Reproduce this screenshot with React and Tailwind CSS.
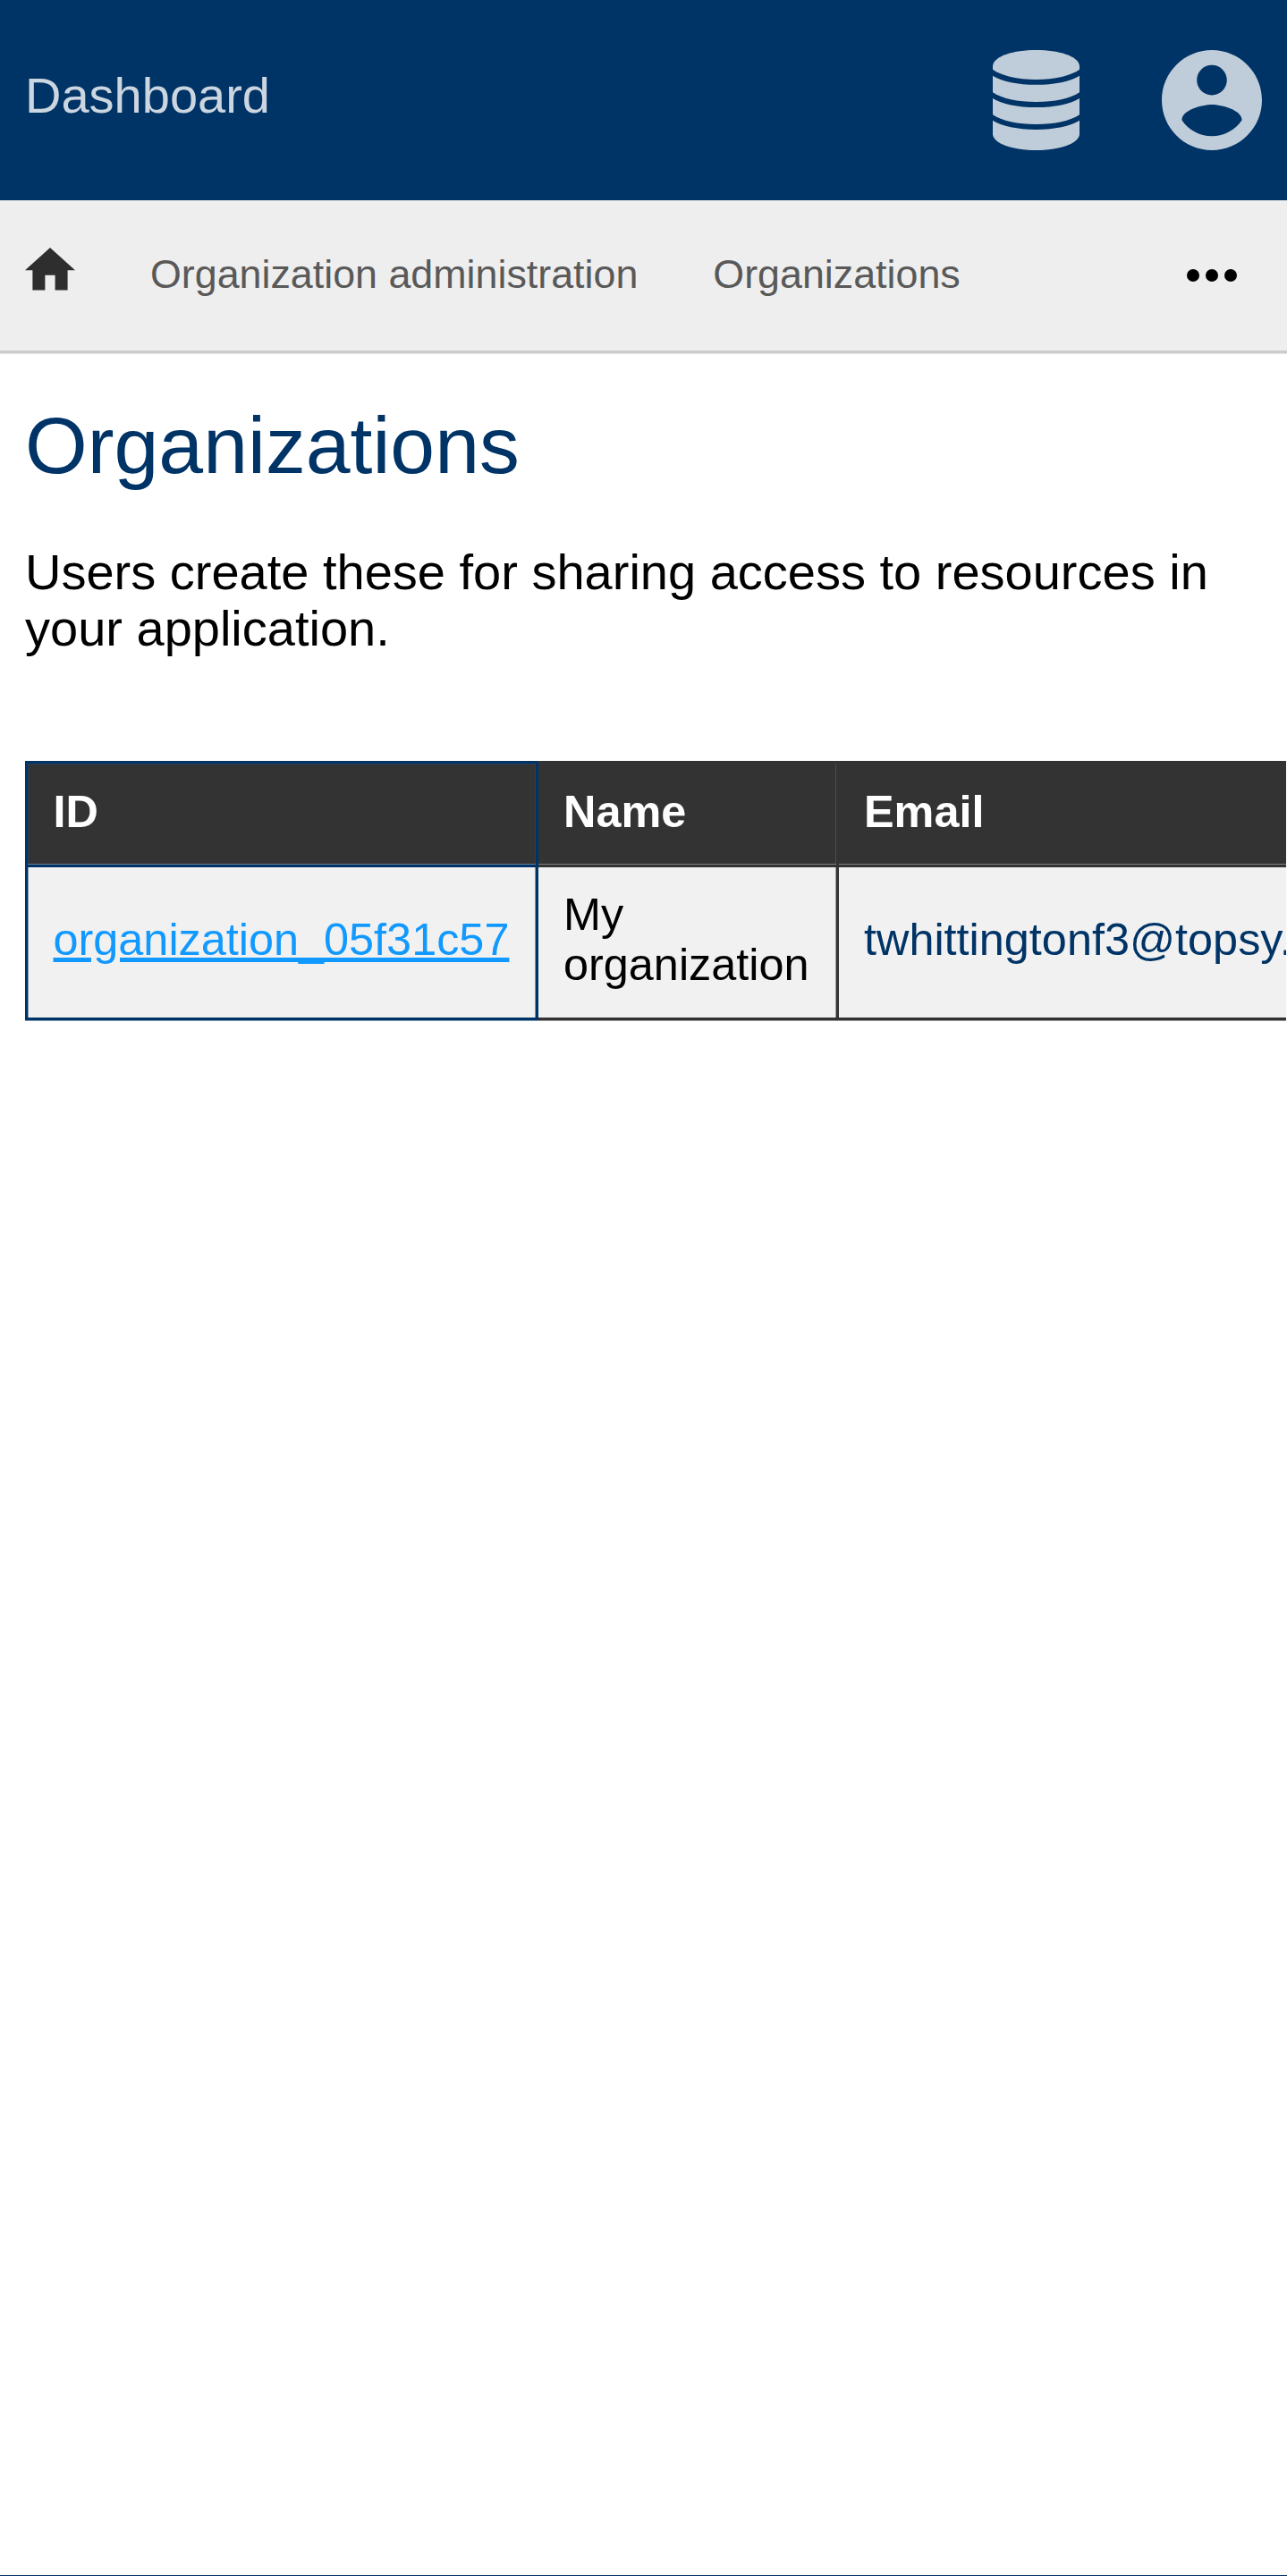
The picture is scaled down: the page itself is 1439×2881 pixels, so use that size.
import React from 'react';

function DatabaseIcon() {
  return (
    <svg className="h-[112px] w-[97px]" viewBox="0 0 97 112" fill="currentColor" aria-hidden="true">
      <path d="M0 17.5C1.500 6.500 23 0 48.500 0S95.500 6.500 97 17.500V21.800C88 28.600 69 33 48.500 33S9 28.600 0 21.800Z" />
      <path d="M0 28.700C10 35 28 38.800 48.500 38.800S87 35 97 28.700V47.200C87 54 69 58 48.500 58S10 54 0 47.200Z" />
      <path d="M0 53.900C10 60.200 28 64 48.500 64S87 60.200 97 53.900V72.300C87 79.100 69 83.100 48.500 83.100S10 79.100 0 72.300Z" />
      <path d="M0 78.800C10 85.100 28 88.900 48.500 88.900S87 85.100 97 78.800V94.500C95.500 105 74 112 48.500 112S1.500 105 0 94.500Z" />
    </svg>
  );
}

function AccountIcon() {
  return (
    <svg className="size-[112px]" viewBox="2 2 20 20" fill="currentColor" aria-hidden="true">
      <path d="M12 2C6.480 2 2 6.480 2 12s4.480 10 10 10 10-4.480 10-10S17.520 2 12 2zm0 3c1.660 0 3 1.340 3 3s-1.340 3-3 3-3-1.340-3-3 1.340-3 3-3zm0 14.200c-2.500 0-4.710-1.280-6-3.220.030-1.990 4-3.080 6-3.080 1.990 0 5.970 1.090 6 3.080-1.290 1.940-3.500 3.220-6 3.220z" />
    </svg>
  );
}

function HomeIcon() {
  return (
    <svg className="h-[47.600px] w-[56px]" viewBox="2 3 20 17" fill="currentColor" aria-hidden="true">
      <path d="M10 20v-6h4v6h5v-8h3L12 3 2 12h3v8z" />
    </svg>
  );
}

function MoreIcon() {
  return (
    <svg className="h-[14px] w-[56px]" viewBox="0 0 56 14" fill="currentColor" aria-hidden="true">
      <circle cx="7" cy="7" r="7" />
      <circle cx="28" cy="7" r="7" />
      <circle cx="49" cy="7" r="7" />
    </svg>
  );
}

export default function App() {
  return (
    <div className="flex h-[2881px] w-full flex-col overflow-hidden border-b border-[#003366] bg-white font-['Liberation_Sans',Arial,sans-serif] text-black">
      <header className="flex h-[224px] shrink-0 items-center justify-between bg-[#003366] pl-[28px] pr-[28.500px]">
        <a className="pb-[11px] text-[56px] leading-[63px] text-[#ccd6e0]">Dashboard</a>
        <div className="flex items-center gap-[91.500px] text-[#bfccd9]">
          <DatabaseIcon />
          <AccountIcon />
        </div>
      </header>

      <nav className="flex h-[171px] shrink-0 items-start border-b-[3px] border-[#cccccc] bg-[#eeeeee] pl-[28px] pr-[56.500px] text-[44.800px] leading-[50px] text-[#595959] shadow-[0_1px_0_#e5e5e5]">
        <a className="pt-[53.400px] text-[#2e2e2e]"><HomeIcon /></a>
        <a className="ml-[84px] pt-[57px]">Organization administration</a>
        <a className="ml-[84px] pt-[57px]">Organizations</a>
        <button className="ml-auto pt-[77px] text-black"><MoreIcon /></button>
      </nav>

      <main className="mr-px flex flex-col overflow-hidden pl-[28px] pt-[53px]">
        <h1 className="text-[89.600px] leading-[100px] text-[#003366]">Organizations</h1>
        <p className="mt-[60px] pr-[28px] text-[56px] leading-[63px]">
          Users create these for sharing access to resources in your application.
        </p>
        <div className="mt-[117px] overflow-hidden pb-[4px]">
          <table className="w-[1700px] table-fixed border-separate border-spacing-0 text-left text-[50.400px] leading-[56px]">
            <colgroup>
              <col className="w-[574px]" />
              <col className="w-[336px]" />
              <col className="w-[790px]" />
            </colgroup>
            <thead>
              <tr className="h-[119px] bg-[#333333] text-white">
                <th className="border-[3px] border-[#003366] pb-[6px] pl-[28.500px] shadow-[inset_0_-1px_0_#668099,inset_0_0_0_1px_#26405a]">ID</th>
                <th className="border-y-[3px] border-r-[3px] border-[#333333] pb-[6px] pl-[28px] shadow-[inset_0_-1px_0_#808080,inset_-1px_0_0_#4a4a4a]">Name</th>
                <th className="border-y-[3px] border-[#333333] pb-[6px] pl-[28px] shadow-[inset_0_-1px_0_#808080]">Email</th>
              </tr>
            </thead>
            <tbody>
              <tr className="h-[171px] bg-[#f1f1f1]">
                <td className="border-x-[3px] border-b-[3px] border-[#003366] pb-[7px] pl-[28.500px] shadow-[0_1px_0_#8099b2,inset_1px_0_0_#8099b2,inset_-1px_0_0_#8099b2]">
                  <a className="text-[#1199ff] underline">organization_05f31c57</a>
                </td>
                <td className="border-b-[3px] border-r-[3px] border-[#333333] pb-[7px] pl-[28px] shadow-[0_1px_0_#999999,inset_-1px_0_0_#999999]">
                  My<br />organization
                </td>
                <td className="border-b-[3px] border-[#333333] pb-[7px] pl-[28px] text-[#003366] shadow-[0_1px_0_#999999]">twhittingtonf3@topsy.com</td>
              </tr>
            </tbody>
          </table>
        </div>
      </main>
    </div>
  );
}
